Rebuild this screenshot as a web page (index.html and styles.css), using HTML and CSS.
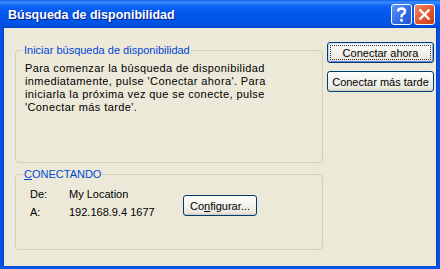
FILE: index.html
```html
<!DOCTYPE html>
<html lang="es">

<head>
    <meta charset="UTF-8">
    <title>Búsqueda de disponibilidad</title>
    <link rel="stylesheet" href="styles.css">
</head>

<body>
    <div class="window">
        <div class="titlebar">
            <span class="title">Búsqueda de disponibilidad</span>
            <div class="title-buttons">
                <button class="cap-btn help-btn">
                    <svg viewBox="0 0 21 21" width="21" height="21">
                        <path d="M7 7.5 Q7 4.5 10.5 4.5 Q14 4.5 14 7.5 Q14 9.3 11.8 10.3 Q10.5 11 10.5 12.5 V13.5" fill="none" stroke="white" stroke-width="2.4"/>
                        <rect x="9.2" y="15" width="2.6" height="2.6" fill="white"/>
                    </svg>
                </button>
                <button class="cap-btn close-btn">
                    <svg viewBox="0 0 21 21" width="21" height="21">
                        <path d="M5.5 5.5 L15.5 15.5 M15.5 5.5 L5.5 15.5" stroke="white" stroke-width="2.4"/>
                    </svg>
                </button>
            </div>
        </div>
        <div class="client">
            <div class="groups">
                <fieldset class="group group-start">
                    <legend>Iniciar búsqueda de disponibilidad</legend>
                    <p class="info">Para comenzar la búsqueda de disponibilidad<br>inmediatamente, pulse 'Conectar ahora'. Para<br>iniciarla la próxima vez que se conecte, pulse<br>'Conectar más tarde'.</p>
                </fieldset>
                <fieldset class="group group-conn">
                    <legend><u>C</u>ONECTANDO</legend>
                    <div class="conn-grid">
                        <span>De:</span>
                        <span>My Location</span>
                        <button class="xp-btn config-btn">Co<u>n</u>figurar...</button>
                        <span>A:</span>
                        <span>192.168.9.4 1677</span>
                    </div>
                </fieldset>
            </div>
            <div class="actions">
                <button class="xp-btn default-btn">Conectar ahora</button>
                <button class="xp-btn">Conectar más tarde</button>
            </div>
        </div>
    </div>
</body>

</html>
```
FILE: styles.css
```css
body,
html {
    margin: 0;
    padding: 0;
    font-family: 'Liberation Sans', Arial, sans-serif;
    font-size: 11px;
}

.window {
    width: 440px;
    height: 269px;
    box-sizing: border-box;
    background-color: #ece9d8;
    border: 3px solid #0553e2;
    border-top: none;
    display: flex;
    flex-direction: column;
    box-shadow: inset 1px 0 0 #0a3fc4, inset -1px 0 0 #0a3fc4;
}

.titlebar {
    height: 28px;
    margin: 0 -3px;
    background: linear-gradient(#0a5ee8 0, #3d8dff 2px, #0c62f2 6px, #0058ec 14px, #0054e3 24px, #0045cf 28px);
    display: flex;
    align-items: center;
    justify-content: space-between;
    padding: 0 5px 0 8px;
}

.title {
    color: white;
    font-weight: bold;
    font-size: 12.5px;
    text-shadow: 1px 1px #0a1c8a;
    padding-top: 1px;
}

.title-buttons {
    display: flex;
    gap: 2px;
    padding-top: 1px;
}

.cap-btn {
    width: 21px;
    height: 21px;
    padding: 0;
    border: 1px solid white;
    border-radius: 3px;
    box-sizing: border-box;
    display: flex;
    align-items: center;
    justify-content: center;
}

.cap-btn svg {
    flex-shrink: 0;
}

.help-btn {
    background: linear-gradient(135deg, #5b97f8, #2e68e4 60%, #1f52d2);
}

.close-btn {
    background: linear-gradient(135deg, #f08a64, #e2552f 55%, #c83a14);
}

.client {
    flex-grow: 1;
    display: flex;
    padding: 0 1px 0 12px;
}

.groups {
    width: 308px;
    display: flex;
    flex-direction: column;
}

.group {
    margin: 16px 0 0;
    padding: 0;
    border: 1px solid #d0d0bf;
    border-radius: 4px;
    box-sizing: border-box;
}

.group legend {
    color: #0046d5;
    line-height: 13px;
    margin-left: 7px;
    padding: 0 1px;
}

.group-start {
    height: 119px;
}

.group-conn {
    margin-top: 5px;
    height: 82px;
}

.info {
    margin: 0;
    padding: 5px 0 0 9px;
    line-height: 13px;
    letter-spacing: 0.4px;
    white-space: nowrap;
}

.conn-grid {
    display: grid;
    grid-template-columns: 39px 114px auto;
    grid-template-rows: 18px 18px;
    align-items: center;
    padding: 4px 0 0 14px;
    line-height: 13px;
}

.config-btn {
    grid-row: 1 / span 2;
    grid-column: 3;
    align-self: start;
    margin-top: 10px;
    width: 74px;
    height: 22px;
}

.actions {
    width: 107px;
    margin-left: 4px;
    padding-top: 14px;
    display: flex;
    flex-direction: column;
    gap: 8px;
}

.xp-btn {
    font-family: 'Liberation Sans', Arial, sans-serif;
    font-size: 11px;
    color: black;
    height: 21px;
    padding: 0;
    border: 1px solid #003c74;
    border-radius: 3px;
    background: linear-gradient(#ffffff, #f5f4ef 40%, #ebe9e1 85%, #d6d0c5);
    box-shadow: inset 0 -1px 0 #d6d0c5;
    cursor: pointer;
}

.default-btn {
    box-shadow: inset 0 1px 0 #cee7ff, inset 1px 0 0 #bcd4f6, inset -1px 0 0 #89ade4, inset 0 -1px 0 #6982ee;
    outline: 1px dotted #333;
    outline-offset: -4px;
}
```
